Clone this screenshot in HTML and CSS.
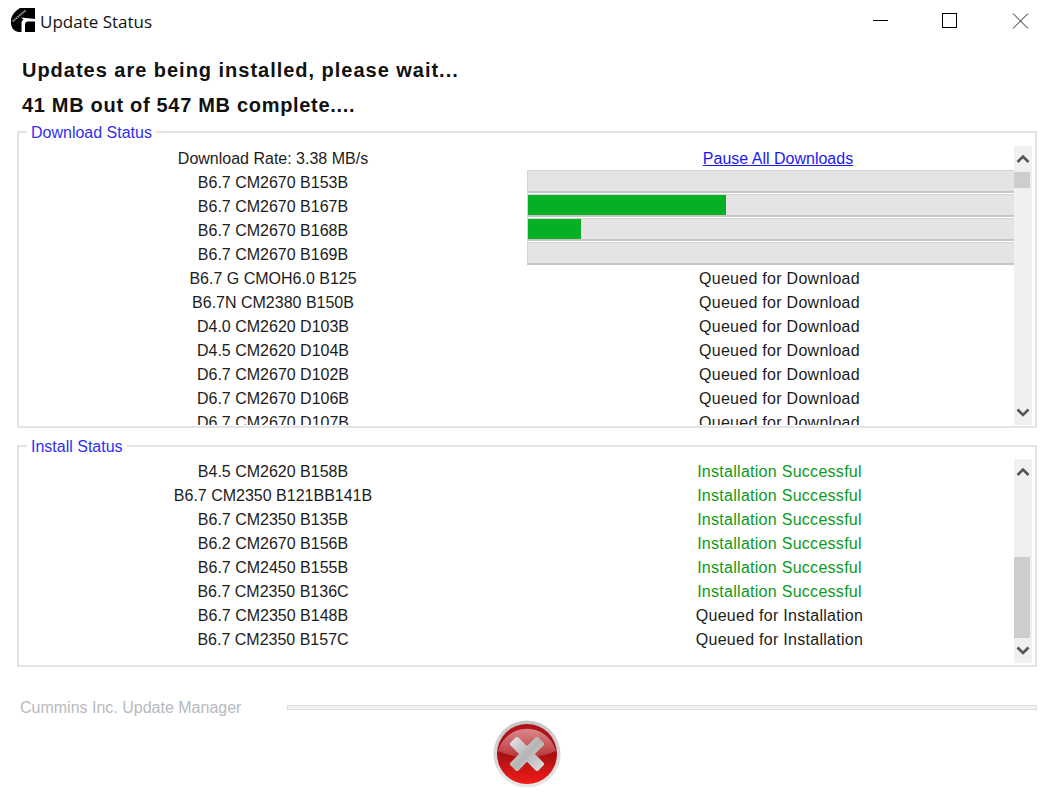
FILE: index.html
```html
<!DOCTYPE html>
<html lang="en">
<head>
    <meta charset="UTF-8">
    <title>Update Status</title>
    <link rel="stylesheet" href="styles.css">
</head>
<body>
    <header class="titlebar">
        <svg class="logo" viewBox="0 0 24 24" width="24" height="24">
            <path d="M9 0H24V24H7Q0 22 0 15V11Q2 4 9 0Z" fill="#000"/>
            <path d="M10 9.5L24 11V13.5H16.5Q14.5 13.5 14 16V24H10.5V15Q10.5 12 12.5 11.5Z" fill="#fff"/>
            <path d="M1.5 13.5L14.5 2.5" stroke="#8a8a8a" stroke-width="2.2" stroke-dasharray="1.6 .6" fill="none"/>
        </svg>
        <span class="title">Update Status</span>
        <div class="window-btns">
            <svg viewBox="0 0 70 44" width="70" height="44"><path d="M29 20.5H44" stroke="#000"/></svg>
            <svg viewBox="0 0 70 44" width="70" height="44"><rect x="28.5" y="13.5" width="14" height="14" fill="none" stroke="#000"/></svg>
            <svg viewBox="0 0 70 44" width="70" height="44"><path d="M29 13.5L44 28.5M44 13.5L29 28.5" stroke="#222"/></svg>
        </div>
    </header>

    <main class="content">
        <h1 class="status-line">Updates are being installed, please wait...</h1>
        <h2 class="status-line">41 MB out of 547 MB complete....</h2>

        <fieldset class="group group-download">
            <legend>Download Status</legend>
            <div class="group-body">
                <div class="rows">
                    <div class="cell">Download Rate: 3.38 MB/s</div>
                    <div class="cell"><a href="#">Pause All Downloads</a></div>
                    <div class="cell">B6.7 CM2670 B153B</div>
                    <div class="bar"><div class="bar-fill" style="width: 0"></div></div>
                    <div class="cell">B6.7 CM2670 B167B</div>
                    <div class="bar"><div class="bar-fill" style="width: 198px"></div></div>
                    <div class="cell">B6.7 CM2670 B168B</div>
                    <div class="bar"><div class="bar-fill" style="width: 53px"></div></div>
                    <div class="cell">B6.7 CM2670 B169B</div>
                    <div class="bar"><div class="bar-fill" style="width: 0"></div></div>
                    <div class="cell">B6.7 G CMOH6.0 B125</div>
                    <div class="cell status">Queued for Download</div>
                    <div class="cell">B6.7N CM2380 B150B</div>
                    <div class="cell status">Queued for Download</div>
                    <div class="cell">D4.0 CM2620 D103B</div>
                    <div class="cell status">Queued for Download</div>
                    <div class="cell">D4.5 CM2620 D104B</div>
                    <div class="cell status">Queued for Download</div>
                    <div class="cell">D6.7 CM2670 D102B</div>
                    <div class="cell status">Queued for Download</div>
                    <div class="cell">D6.7 CM2670 D106B</div>
                    <div class="cell status">Queued for Download</div>
                    <div class="cell">D6.7 CM2670 D107B</div>
                    <div class="cell status">Queued for Download</div>
                </div>
                <div class="scrollbar">
                    <div class="arrow"><svg viewBox="0 0 18 18" width="18" height="18"><path d="M3.5 12L9 6.5L14.5 12" fill="none" stroke="#555" stroke-width="2.6"/></svg></div>
                    <div class="track"><div class="thumb thumb-download"></div></div>
                    <div class="arrow"><svg viewBox="0 0 18 18" width="18" height="18"><path d="M3.5 6.5L9 12L14.5 6.5" fill="none" stroke="#555" stroke-width="2.6"/></svg></div>
                </div>
            </div>
        </fieldset>

        <fieldset class="group group-install">
            <legend>Install Status</legend>
            <div class="group-body">
                <div class="rows">
                    <div class="cell">B4.5 CM2620 B158B</div>
                    <div class="cell status ok">Installation Successful</div>
                    <div class="cell">B6.7 CM2350 B121BB141B</div>
                    <div class="cell status ok">Installation Successful</div>
                    <div class="cell">B6.7 CM2350 B135B</div>
                    <div class="cell status ok">Installation Successful</div>
                    <div class="cell">B6.2 CM2670 B156B</div>
                    <div class="cell status ok">Installation Successful</div>
                    <div class="cell">B6.7 CM2450 B155B</div>
                    <div class="cell status ok">Installation Successful</div>
                    <div class="cell">B6.7 CM2350 B136C</div>
                    <div class="cell status ok">Installation Successful</div>
                    <div class="cell">B6.7 CM2350 B148B</div>
                    <div class="cell status">Queued for Installation</div>
                    <div class="cell">B6.7 CM2350 B157C</div>
                    <div class="cell status">Queued for Installation</div>
                </div>
                <div class="scrollbar">
                    <div class="arrow"><svg viewBox="0 0 18 18" width="18" height="18"><path d="M3.5 12L9 6.5L14.5 12" fill="none" stroke="#555" stroke-width="2.6"/></svg></div>
                    <div class="track"><div class="thumb thumb-install"></div></div>
                    <div class="arrow"><svg viewBox="0 0 18 18" width="18" height="18"><path d="M3.5 6.5L9 12L14.5 6.5" fill="none" stroke="#555" stroke-width="2.6"/></svg></div>
                </div>
            </div>
        </fieldset>

        <div class="brand">
            <span class="brand-name">Cummins Inc. Update Manager</span>
            <div class="brand-rule"></div>
        </div>

        <div class="actions">
            <svg class="cancel" viewBox="0 0 68 68" width="68" height="68">
                <defs>
                    <linearGradient id="ring" x1="0" y1="0" x2="0" y2="1">
                        <stop offset="0" stop-color="#c4c4c4"/>
                        <stop offset="1" stop-color="#e8e8e8"/>
                    </linearGradient>
                    <linearGradient id="red" x1="0" y1="0" x2="0" y2="1">
                        <stop offset="0" stop-color="#b01418"/>
                        <stop offset="0.5" stop-color="#a80f12"/>
                        <stop offset="1" stop-color="#f21c18"/>
                    </linearGradient>
                    <linearGradient id="shine" x1="0" y1="0" x2="0" y2="1">
                        <stop offset="0" stop-color="#d88a8e"/>
                        <stop offset="1" stop-color="#bb3438"/>
                    </linearGradient>
                    <linearGradient id="cross" x1="0" y1="0" x2="1" y2="1">
                        <stop offset="0" stop-color="#e2e2e2"/>
                        <stop offset="0.5" stop-color="#b4b4b4"/>
                        <stop offset="1" stop-color="#dcdcdc"/>
                    </linearGradient>
                </defs>
                <circle cx="34" cy="34" r="33.5" fill="url(#ring)"/>
                <circle cx="34" cy="34" r="30" fill="url(#red)"/>
                <path d="M5 31A30 30 0 0 1 63 31Q34 44 5 31Z" fill="url(#shine)"/>
                <path d="M24 19L34 29L44 19L49 24L39 34L49 44L44 49L34 39L24 49L19 44L29 34L19 24Z" fill="url(#cross)" stroke="url(#cross)" stroke-width="4" stroke-linejoin="round"/>
            </svg>
        </div>
    </main>
</body>
</html>
```

FILE: styles.css
```css
* {
    margin: 0;
    padding: 0;
    box-sizing: border-box;
}

body {
    font-family: "Liberation Sans", Arial, sans-serif;
    font-size: 16px;
    background: white;
    color: #1c1c1c;
    height: 795px;
    overflow: hidden;
}

.titlebar {
    display: flex;
    align-items: center;
    height: 44px;
    padding-left: 11px;
    padding-bottom: 4px;
}

.logo {
    flex: none;
}

.title {
    margin-left: 5px;
    margin-top: 2px;
    font-family: "Open Sans", sans-serif;
    font-size: 17px;
    color: #111;
}

.window-btns {
    display: flex;
    align-self: flex-start;
    margin-left: auto;
}

.content {
    padding: 0 17px;
}

.status-line {
    font-size: 20px;
    font-weight: bold;
    line-height: 35px;
    padding-left: 5px;
    color: #111;
}

h1.status-line {
    margin-top: 9px;
    letter-spacing: 0.98px;
}

h2.status-line {
    letter-spacing: 0.69px;
}

.group {
    border: 2px solid #e4e4e4;
    min-width: 0;
}

.group legend {
    margin-left: 8px;
    padding: 0 4px;
    height: 20px;
    line-height: 22px;
    color: #3030f0;
}

.group-download {
    height: 306px;
    margin-top: -1px;
}

.group-install {
    height: 231px;
    margin-top: 8px;
}

.group-body {
    display: flex;
}

.group-download .group-body {
    height: 283px;
    padding-top: 4px;
}

.group-install .group-body {
    height: 207px;
    padding-top: 3px;
}

.rows {
    flex: 1;
    min-width: 0;
    overflow: hidden;
    display: grid;
    grid-template-columns: 508px 502px;
    grid-auto-rows: 24px;
}

.cell {
    text-align: center;
    height: 24px;
    line-height: 26px;
    white-space: nowrap;
}

.cell a {
    color: #1a1af0;
}

.status {
    padding-left: 3px;
    letter-spacing: 0.28px;
}

.ok {
    color: #0d9a1a;
}

.bar {
    height: 23px;
    background: #e4e4e4;
    border: 1px solid #d4d4d4;
    border-bottom: 2px solid #c6c6c6;
    border-right: none;
}

.bar-fill {
    height: 100%;
    background: #06b025;
}

.scrollbar {
    flex: none;
    width: 18px;
    margin-right: 3px;
    background: #f0f0f0;
    display: flex;
    flex-direction: column;
}

.arrow {
    flex: none;
    height: 26px;
    display: flex;
    align-items: center;
}

.track {
    flex: 1;
    min-height: 0;
}

.thumb {
    width: 16px;
    background: #cdcdcd;
}

.thumb-download {
    height: 16px;
}

.thumb-install {
    height: 81px;
    margin-top: 72px;
}

.brand {
    display: flex;
    align-items: center;
    margin-top: 30px;
    height: 20px;
    padding-left: 3px;
}

.brand-name {
    padding-top: 2px;
    color: #b6babe;
}

.brand-rule {
    flex: 1;
    height: 5px;
    margin-left: 46px;
    background: #f2f2f2;
    border: 1px solid #dcdcdc;
}

.actions {
    display: flex;
    justify-content: center;
    margin-top: 3px;
}
```
